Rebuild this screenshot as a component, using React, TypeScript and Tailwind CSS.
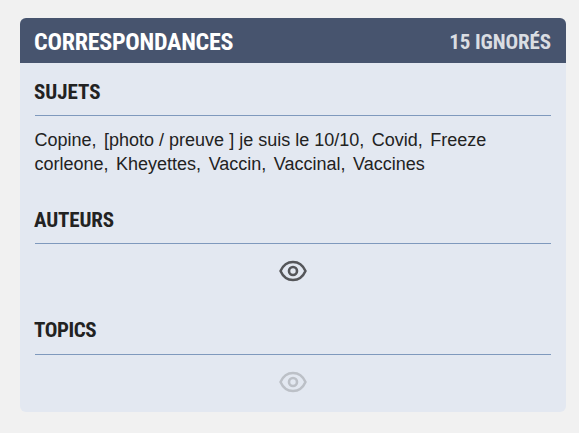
function Eye({ className }: { className: string }) {
  return (
    <svg viewBox="0 0 28 22" width="28" height="22" fill="none" stroke="currentColor" strokeWidth="2.5" className={className}>
      <path d="M1.500 11C4 5.400 8.600 2 14 2S24 5.400 26.500 11C24 16.600 19.400 20 14 20S4 16.600 1.500 11Z" strokeLinejoin="round" />
      <circle cx="14" cy="11" r="4" strokeWidth="2.600" />
    </svg>
  );
}

const title = "font-['Roboto_Condensed','Roboto',sans-serif] font-bold whitespace-nowrap [font-stretch:75%]";

function Heading({ children, height = "h-[34px]", tracking }: { children: string; height?: string; tracking: string }) {
  return (
    <div className={`${height} border-b border-[#7f99bd] text-[#222222]`}>
      <h2 className={`${title} -ml-px text-[21px] leading-5 ${tracking}`}>{children}</h2>
    </div>
  );
}

const subjects = [
  ["Copine,", "[photo / preuve ] je suis le 10/10,", "Covid,", "Freeze"],
  ["corleone,", "Kheyettes,", "Vaccin,", "Vaccinal,", "Vaccines"],
];

export default function App() {
  return (
    <main className="h-[433px] w-[579px] bg-[#f1f1f1] pt-[18px] pl-5">
      <section className="h-[394px] w-[546px] overflow-hidden rounded-md bg-[#e3e8f1]">
        <header className="flex h-[45px] items-center justify-between bg-[#47546e] pt-[2px] pr-[15px] pl-[14px]">
          <h1 className={`${title} text-[24px] tracking-[-0.25px] text-white`}>CORRESPONDANCES</h1>
          <span className={`${title} pt-[2px] text-[21px] tracking-[-0.1px] text-[#dadde2]`}>15 IGNORÉS</span>
        </header>
        <div className="px-[15px] pt-[19px]">
          <Heading tracking="tracking-[0px]">SUJETS</Heading>
          <div className="-ml-[0.5px] h-[94px] pt-3 font-['Liberation_Sans',sans-serif] text-[18px] leading-6 text-[#222222]">
            {subjects.map((line) => (
              <p key={line[0]} className="flex gap-[7.500px] whitespace-nowrap">
                {line.map((item) => <span key={item}>{item}</span>)}
              </p>
            ))}
          </div>
          <Heading tracking="tracking-[-0.15px]">AUTEURS</Heading>
          <div className="flex h-[76px] justify-center pt-4"><Eye className="text-[#55565a]" /></div>
          <Heading height="h-[35px]" tracking="tracking-[-0.4px]">TOPICS</Heading>
          <div className="flex justify-center pt-4"><Eye className="text-[#bcc0c7]" /></div>
        </div>
      </section>
    </main>
  );
}
